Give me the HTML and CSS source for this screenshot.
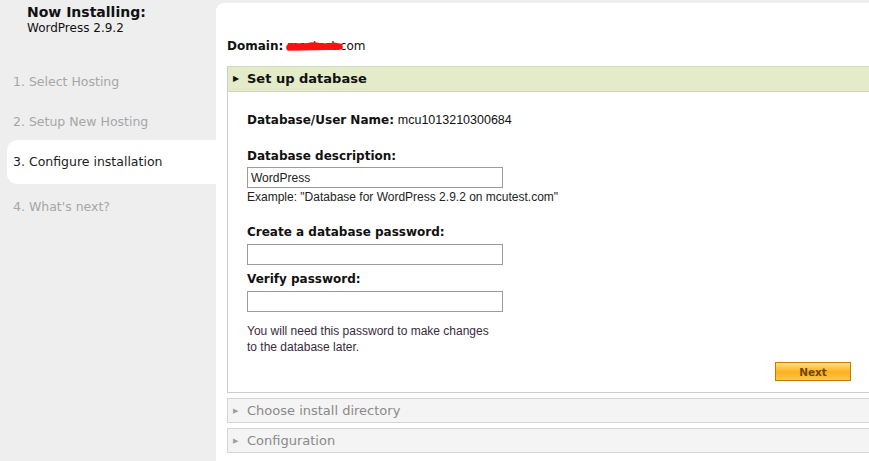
FILE: index.html
```html
<!DOCTYPE html>
<html>
  <head>
    <meta charset="utf-8">
    <title>Now Installing</title>
    <link rel="stylesheet" href="styles.css">
  </head>
  <body>
    <div class="page">

      <div class="sidebar">
        <div class="side-head">
          <div class="side-title">Now Installing:</div>
          <div class="side-app">WordPress 2.9.2</div>
        </div>
        <div class="steps">
          <div class="step">1. Select Hosting</div>
          <div class="step">2. Setup New Hosting</div>
          <div class="step active">3. Configure installation</div>
          <div class="step last">4. What's next?</div>
        </div>
      </div>

      <div class="main">
        <div class="domain">
          <b>Domain:</b>&nbsp;<span class="hidden-name">mcutest.<svg class="scribble" width="60" height="12" viewBox="0 0 60 12"><path d="M3 6 C8 3, 14 9, 22 5 S36 8, 44 5 S51 7, 54 6 M3 7 L54 6 M4 5 L53 5" stroke="#ff1010" stroke-width="5.5" fill="none" stroke-linecap="round"/></svg></span>com
        </div>

        <div class="panel open">
          <div class="panel-head">
            <span class="arrow">&#9654;</span>Set up database
          </div>
          <div class="panel-body">
            <div class="row"><b>Database/User Name:</b> <span class="value">mcu1013210300684</span></div>

            <div class="label first">Database description:</div>
            <div class="field tight"><input class="text-input" type="text" value="WordPress"></div>
            <div class="hint">Example: "Database for WordPress 2.9.2 on mcutest.com"</div>

            <div class="label">Create a database password:</div>
            <div class="field"><input class="text-input" type="password"></div>

            <div class="label small-gap">Verify password:</div>
            <div class="field"><input class="text-input" type="password"></div>

            <div class="note">You will need this password to make changes<br>to the database later.</div>

            <div class="actions">
              <button class="next" type="button">Next</button>
            </div>
          </div>
        </div>

        <div class="panel closed">
          <div class="panel-head"><span class="arrow">&#9654;</span>Choose install directory</div>
        </div>
        <div class="panel closed">
          <div class="panel-head"><span class="arrow">&#9654;</span>Configuration</div>
        </div>
      </div>

    </div>
  </body>
</html>
```

FILE: styles.css
```css
html{
  font-family: "DejaVu Sans", Verdana, sans-serif;
}
body{
  margin: 0;
  background-color: #eeeeee;
}
.page {
  display: flex;
  height: 461px;
  overflow: hidden;
}
.sidebar {
  width: 216px;
  flex-shrink: 0;
}
.side-head {
  padding: 4px 0 0 27px;
}
.side-title {
  font-size: 14px;
  font-weight: bold;
  color: #111111;
  line-height: 16px;
}
.side-app {
  font-size: 12px;
  color: #111111;
  line-height: 16px;
}
.steps {
  margin-top: 24px;
}
.step {
  font-size: 12.5px;
  color: #a6a6a6;
  line-height: 16px;
  padding: 14px 0 10px 13px;
}
.step.active {
  background-color: #ffffff;
  color: #221a22;
  margin-left: 7px;
  padding: 14px 0 14px 6px;
  border-radius: 10px 0 0 10px;
}
.step.last {
  padding-top: 15px;
}
.main {
  flex: 1;
  margin-top: 3px;
  background-color: #ffffff;
  border-top-left-radius: 8px;
  padding: 35px 0 0 11px;
  overflow: hidden;
}
.domain {
  font-size: 12px;
  line-height: 16px;
  color: #111111;
  margin-bottom: 12px;
}
.hidden-name {
  position: relative;
}
.scribble {
  position: absolute;
  left: -1px;
  top: 2px;
}
.panel {
  margin-right: -30px;
  border: 1px solid #cccccc;
}
.panel.open {
  border-top: 1px solid #d4d8c4;
}
.panel-head {
  font-size: 13px;
  line-height: 16px;
  padding: 4px 0 4px 5px;
}
.open .panel-head {
  background-color: #e4ebc8;
  font-weight: bold;
  color: #111111;
  border-bottom: 1px solid #d0d4c0;
}
.arrow {
  display: inline-block;
  width: 14px;
  font-size: 8px;
  vertical-align: 2px;
}
.closed {
  margin-top: 5px;
  border-color: #d4d4d4;
}
.closed .panel-head {
  background-color: #f4f4f4;
  color: #8a8a8a;
  padding: 4px 0 3px 5px;
}
.closed .arrow {
  color: #a0a0a0;
  font-size: 7px;
}
.panel-body {
  padding: 20px 0 11px 19px;
  width: 604px;
}
.row {
  font-size: 12px;
  line-height: 16px;
  color: #111111;
}
.value {
  font-family: "Liberation Sans", Arial, sans-serif;
  font-size: 12.5px;
}
.label {
  font-size: 12px;
  font-weight: bold;
  line-height: 16px;
  color: #111111;
  margin-top: 19px;
}
.label.first {
  margin-top: 20px;
}
.label.small-gap {
  margin-top: 6px;
}
.field {
  margin-top: 4px;
}
.field.tight {
  margin-top: 3px;
}
.text-input {
  box-sizing: border-box;
  width: 256px;
  height: 21px;
  margin: 0;
  padding: 1px 3px;
  border: 1px solid #9c9c9c;
  font-family: "Liberation Sans", Arial, sans-serif;
  font-size: 12px;
  color: #222222;
  display: block;
}
.hint {
  font-family: "Liberation Sans", Arial, sans-serif;
  font-size: 12px;
  line-height: 16px;
  color: #222222;
  margin-top: 1px;
}
.note {
  font-family: "Liberation Sans", Arial, sans-serif;
  font-size: 12px;
  line-height: 16px;
  color: #3a2a3a;
  margin-top: 11px;
}
.actions {
  display: flex;
  justify-content: flex-end;
  margin-top: 7px;
}
.next {
  width: 76px;
  height: 19px;
  padding: 0;
  border: 1px solid #c27a00;
  background: linear-gradient(#ffe08a 0%, #ffc444 30%, #ffb020 55%, #ffc850 100%);
  font-family: "DejaVu Sans", Verdana, sans-serif;
  font-size: 10.5px;
  font-weight: bold;
  color: #6e4600;
}
```
